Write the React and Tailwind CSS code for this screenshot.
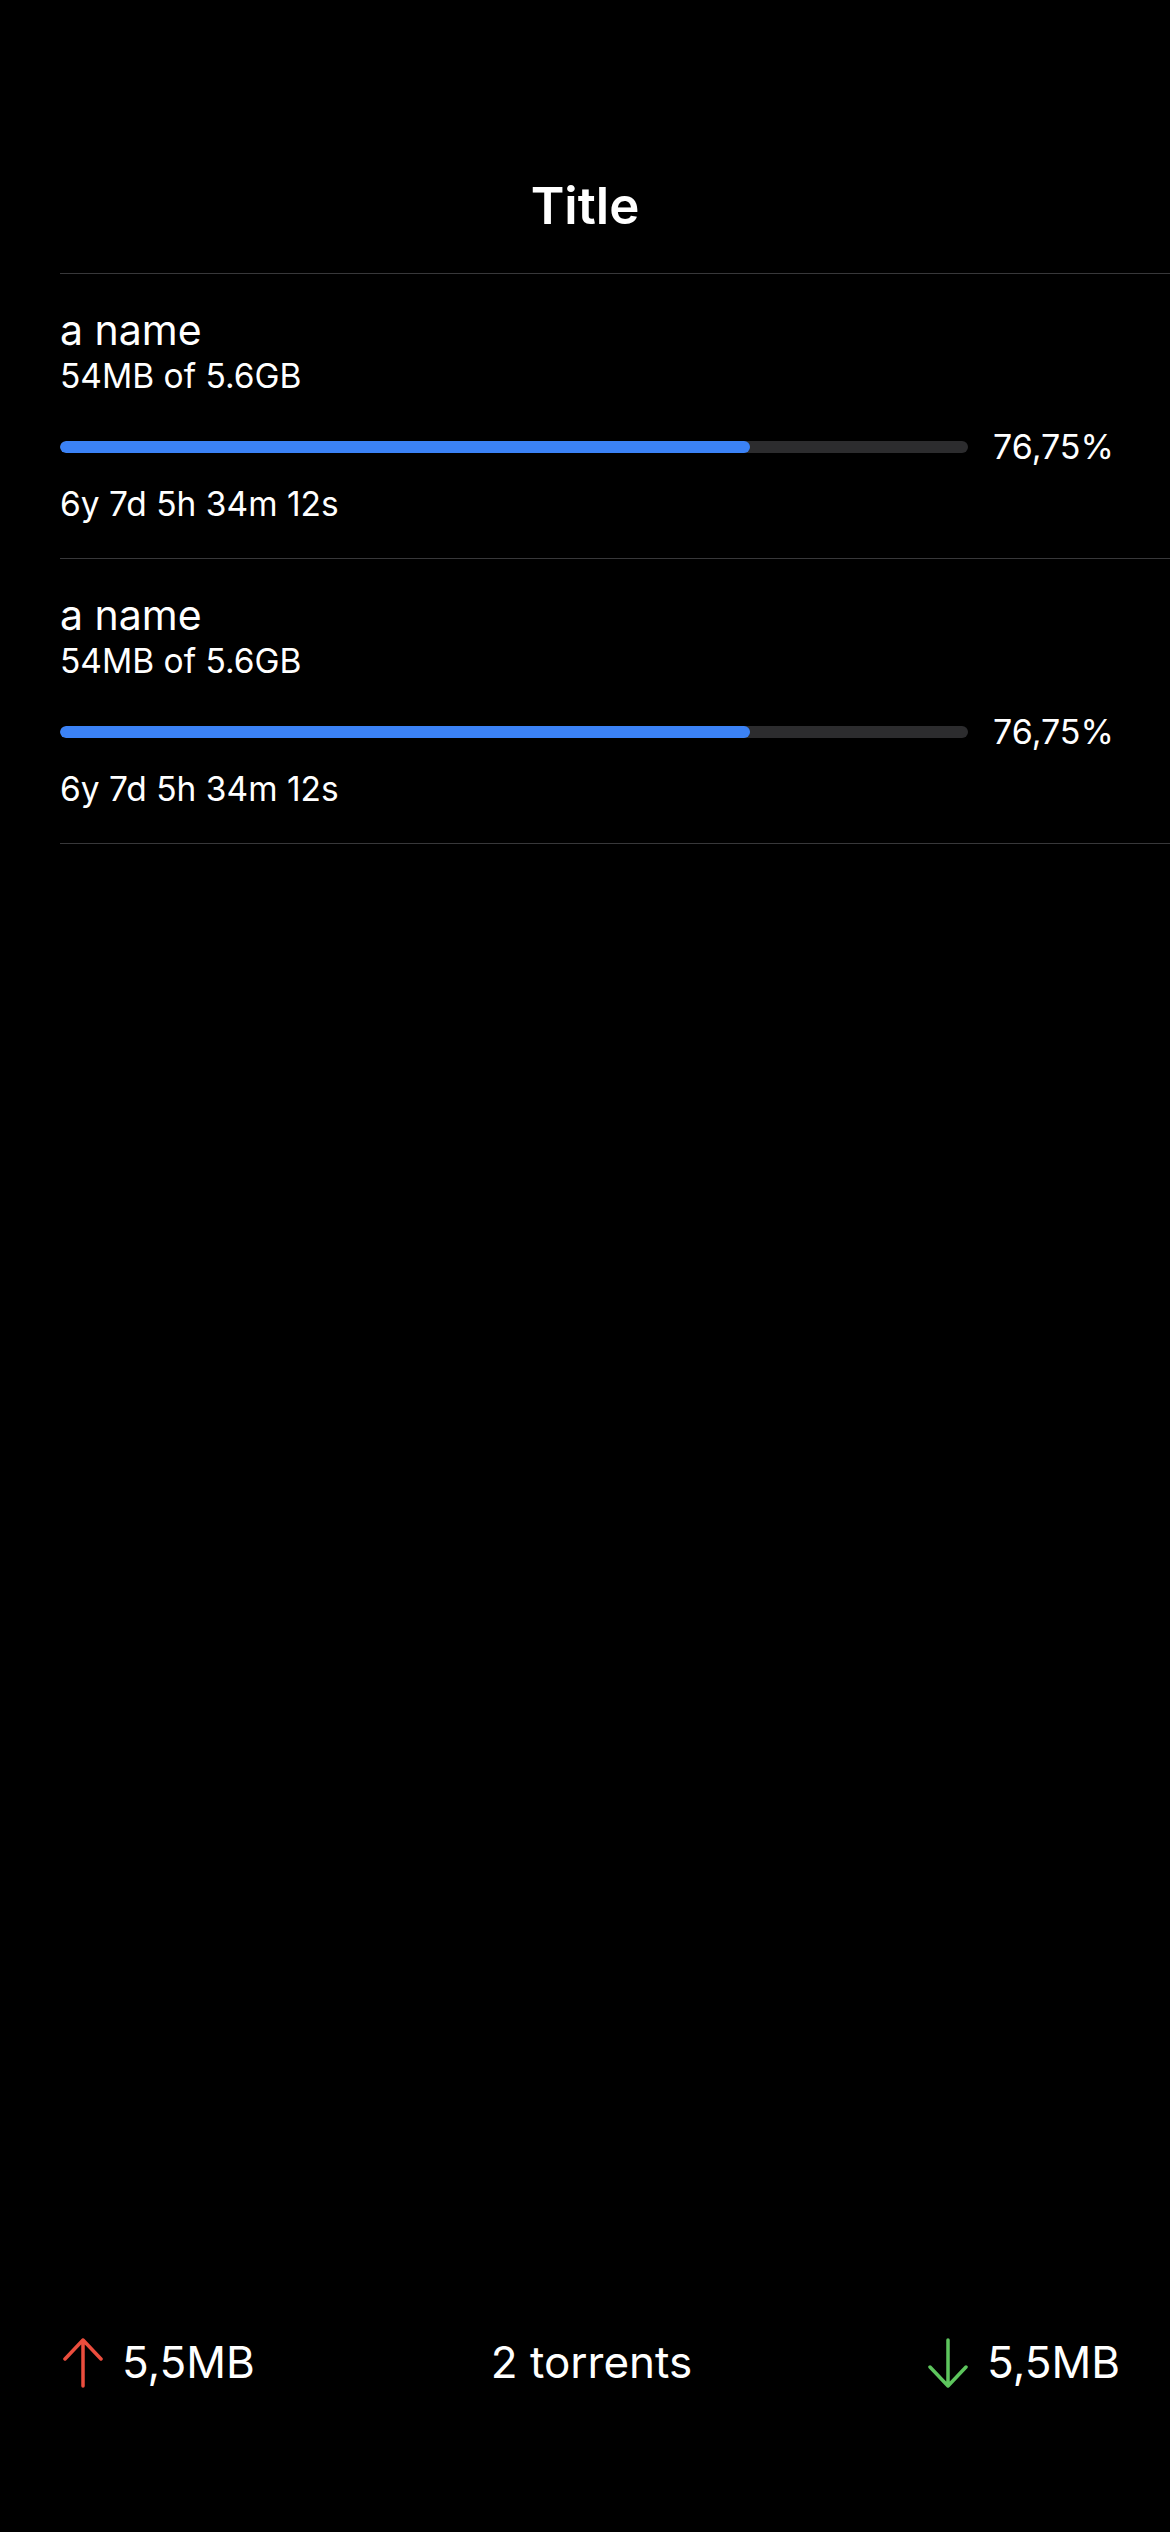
import React from "react";

const torrents = [
  { id: 1, name: "a name", size: "54MB of 5.6GB", progress: 76, label: "76,75%", eta: "6y 7d 5h 34m 12s" },
  { id: 2, name: "a name", size: "54MB of 5.6GB", progress: 76, label: "76,75%", eta: "6y 7d 5h 34m 12s" },
];

function Arrow({ down, color }) {
  return (
    <svg width="40" height="50" viewBox="0 0 40 50" fill="none" className={down ? "rotate-180" : ""}>
      <path d="M20 2V48M2 21L20 2L38 21" stroke={color} strokeWidth="3.5" strokeLinecap="round" strokeLinejoin="round" />
    </svg>
  );
}

export default function App() {
  return (
    <div className="h-[2532px] bg-black text-white flex flex-col font-['Inter','Liberation_Sans',sans-serif]">
      {/* HEADER */}
      <div className="pt-[175px] pb-[36px] text-center text-[51px] leading-[62px] font-semibold">Title</div>

      {/* LIST */}
      <div className="ml-[60px] border-t border-[#38383a]">
        {torrents.map((t) => (
          <div key={t.id} className="border-b border-[#38383a] pt-[31px] pb-[33px]">
            <p className="text-[41px] leading-[50px]">{t.name}</p>
            <p className="text-[33.5px] leading-[42px]">{t.size}</p>
            <div className="mt-[29px] flex items-center gap-[25px]">
              <div className="w-[908px] h-[12px] rounded-full bg-[#2c2c2e] overflow-hidden">
                <div className="h-full rounded-full bg-[#3b82f6]" style={{ width: `${t.progress}%` }} />
              </div>
              <span className="text-[34px] leading-[41px]">{t.label}</span>
            </div>
            <p className="mt-[16px] text-[33.5px] leading-[42px]">{t.eta}</p>
          </div>
        ))}
      </div>

      {/* FOOTER */}
      <div className="mt-auto pb-[143px] pl-[63px] pr-[50px] grid grid-cols-3 items-center text-[44px] leading-[53px]">
        <div className="flex items-center gap-[19px]">
          <Arrow color="#eb4d3d" />
          <span>5,5MB</span>
        </div>
        <div className="text-center">2 torrents</div>
        <div className="flex items-center justify-end gap-[19px]">
          <Arrow down color="#5dc55d" />
          <span>5,5MB</span>
        </div>
      </div>
    </div>
  );
}
